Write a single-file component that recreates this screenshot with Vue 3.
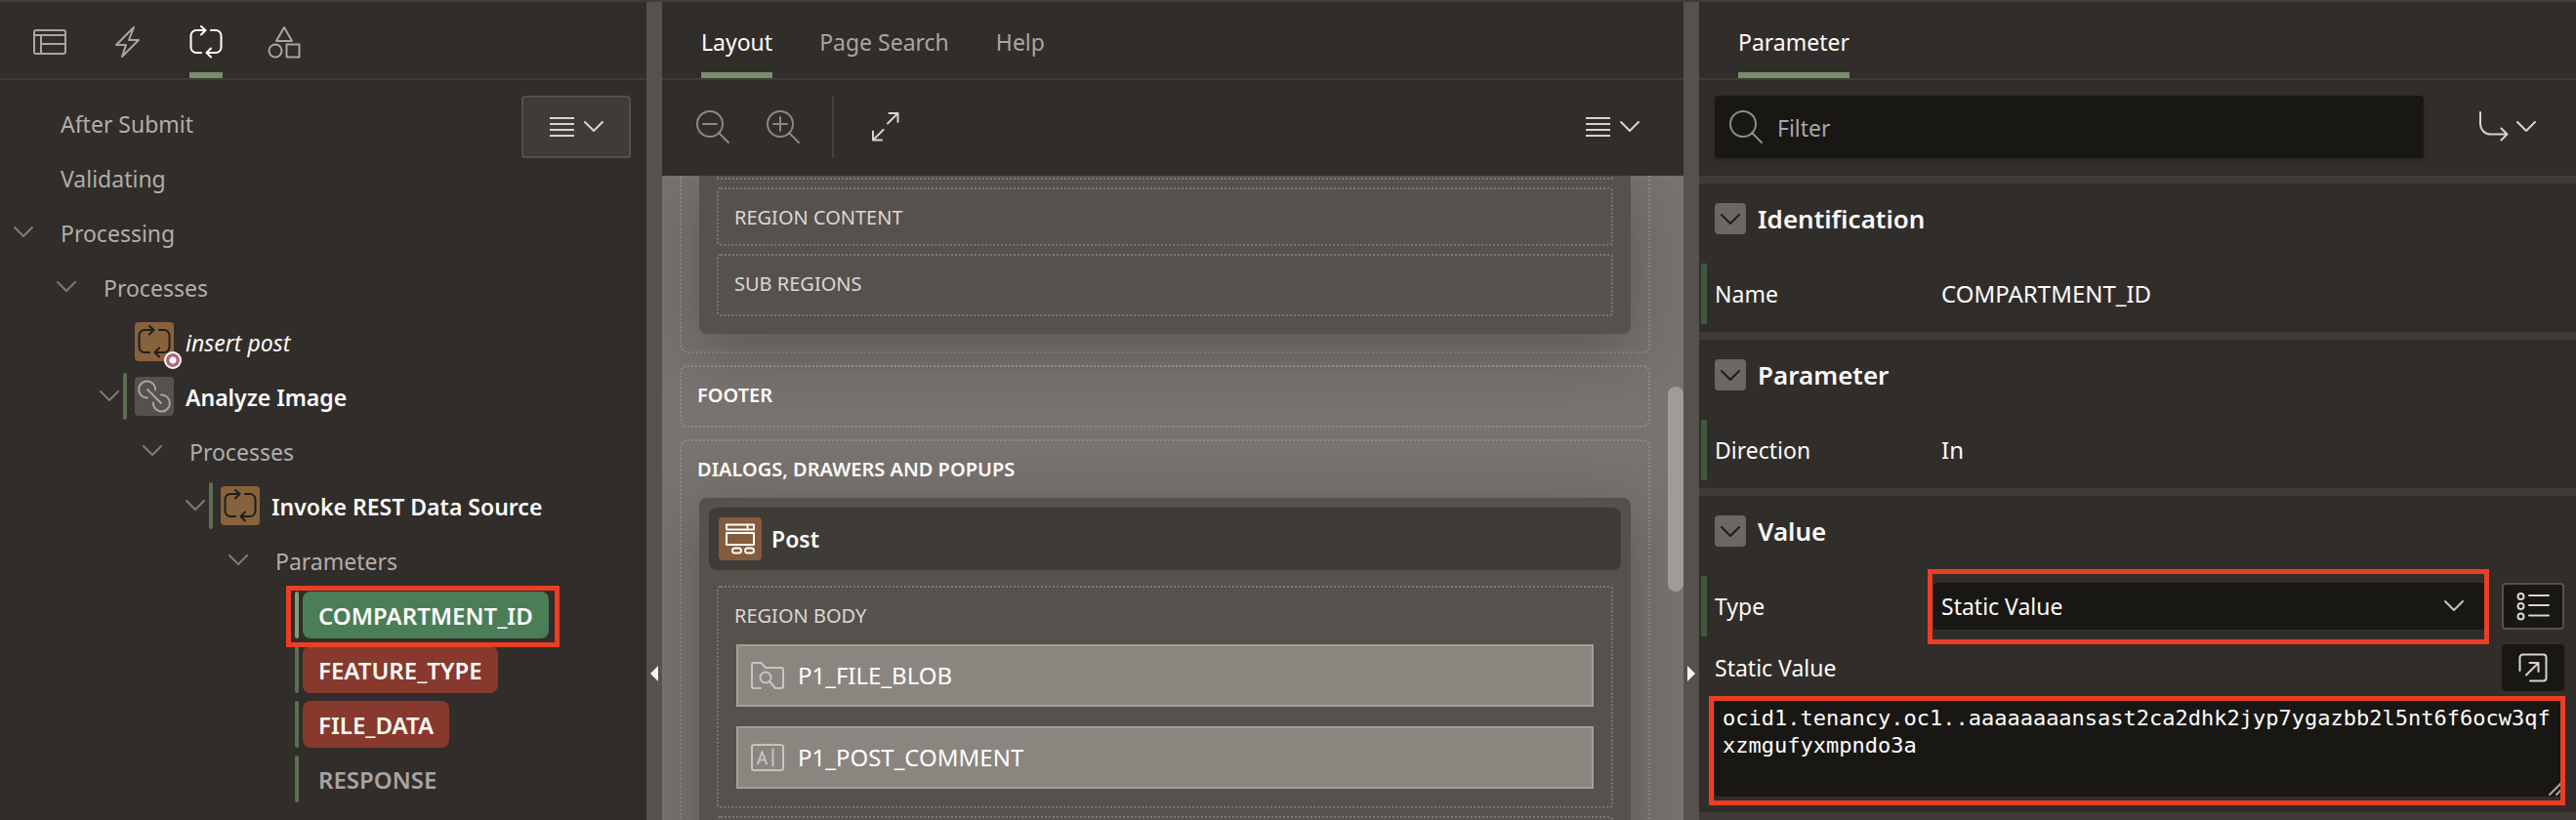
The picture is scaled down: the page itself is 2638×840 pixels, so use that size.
<script setup>
import { ref } from 'vue'

const tree = [
  { text: 'After Submit', level: 0, kind: 'folder' },
  { text: 'Validating', level: 0, kind: 'folder' },
  { text: 'Processing', level: 0, kind: 'folder', open: true },
  { text: 'Processes', level: 1, kind: 'folder', open: true },
  { text: 'insert post', level: 2, kind: 'node', icon: 'process', italic: true, badge: true },
  { text: 'Analyze Image', level: 2, kind: 'node', icon: 'chain', open: true, changed: true },
  { text: 'Processes', level: 3, kind: 'folder', open: true },
  { text: 'Invoke REST Data Source', level: 4, kind: 'node', icon: 'process', open: true, changed: true },
  { text: 'Parameters', level: 5, kind: 'folder', open: true },
  { text: 'COMPARTMENT_ID', level: 6, kind: 'chip', tone: 'selected', changed: true, marked: true },
  { text: 'FEATURE_TYPE', level: 6, kind: 'chip', tone: 'error', changed: true },
  { text: 'FILE_DATA', level: 6, kind: 'chip', tone: 'error', changed: true },
  { text: 'RESPONSE', level: 6, kind: 'chip', tone: 'muted', changed: true }
]

const filter = ref('')
const type = ref('Static Value')
const staticValue = ref('ocid1.tenancy.oc1..aaaaaaaansast2ca2dhk2jyp7ygazbb2l5nt6f6ocw3qfxzmgufyxmpndo3a')
</script>

<template>
  <div class="designer">
    <section class="pane" aria-label="Page processing">
      <nav class="tabs icon-tabs">
        <button class="tab" aria-label="Rendering">
          <svg width="34" height="34" viewBox="0 0 34 34"><rect x="1" y="5" width="32" height="24" rx="2" /><path d="M1 10h32M8 10v19M8 19h25" /></svg>
        </button>
        <button class="tab" aria-label="Dynamic Actions">
          <svg width="34" height="34" viewBox="0 0 34 34"><path d="M23 2L5 20h10l-4 12L28 15H18z" /></svg>
        </button>
        <button class="tab active" aria-label="Processing">
          <svg width="34" height="34" viewBox="0 0 34 34"><path d="M12 28H7a5.5 5.5 0 0 1-5.5-5.5v-12A5.5 5.5 0 0 1 7 5h9M12 1l4.500 4L12 9.500M22 5h5a5.5 5.5 0 0 1 5.5 5.5v12A5.5 5.5 0 0 1 27 28h-9M22 23.500L17.500 28l4.500 4.500" /></svg>
        </button>
        <button class="tab" aria-label="Page Shared Components">
          <svg width="34" height="34" viewBox="0 0 34 34"><path d="M17 2l8 14H9z" /><circle cx="8" cy="26" r="6.5" /><rect x="19.5" y="19.5" width="13" height="13" /></svg>
        </button>
      </nav>
      <div class="tree-area">
        <ul class="tree">
          <li v-for="(row, i) in tree" :key="i" class="row" :class="'level-' + row.level">
            <button v-if="row.open" class="toggle" :aria-label="'Collapse ' + row.text">
              <svg width="20" height="14" viewBox="0 0 20 14"><path d="M1 2l9 9 9-9" /></svg>
            </button>
            <span v-else class="toggle"></span>
            <span class="entry" :class="row.kind">
              <span v-if="row.kind !== 'folder'" class="bar" :class="{ on: row.changed, bright: row.marked }"></span>
              <span v-if="row.icon" class="node-icon" :class="row.icon">
                <svg v-if="row.icon === 'process'" width="34" height="34" viewBox="0 0 34 34"><path d="M12 28H7a5.5 5.5 0 0 1-5.5-5.5v-12A5.5 5.5 0 0 1 7 5h9M12 1l4.500 4L12 9.500M22 5h5a5.5 5.5 0 0 1 5.5 5.5v12A5.5 5.5 0 0 1 27 28h-9M22 23.500L17.500 28l4.500 4.500" /></svg>
                <svg v-else width="34" height="34" viewBox="0 0 34 34"><path d="M10 18.500H9.500A8.500 8.500 0 1 1 18 8.500v2M24 15.500h.5A8.500 8.500 0 1 1 16 25.500v-2M10 10l14 14" /></svg>
                <span v-if="row.badge" class="badge"></span>
              </span>
              <span class="text" :class="[row.tone, { italic: row.italic }]">{{ row.text }}</span>
              <span v-if="row.marked" class="mark row-mark"></span>
            </span>
          </li>
        </ul>
        <button class="menu boxed" aria-label="Tree menu">
          <svg width="25" height="22" viewBox="0 0 25 22"><path d="M0 2h25M0 8h25M0 14h25M0 20h25" /></svg>
          <svg width="20" height="14" viewBox="0 0 20 14"><path d="M1 2l9 9 9-9" /></svg>
        </button>
      </div>
    </section>

    <button class="splitter" aria-label="Collapse left pane"><span class="arrow left"></span></button>

    <section class="pane" aria-label="Layout">
      <nav class="tabs">
        <button class="tab active">Layout</button>
        <button class="tab">Page Search</button>
        <button class="tab">Help</button>
      </nav>
      <div class="toolbar">
        <button class="tool" aria-label="Zoom out">
          <svg width="34" height="34" viewBox="0 0 34 34"><circle cx="14" cy="14" r="13" /><path d="M23 23l10 10M7 14h14" /></svg>
        </button>
        <button class="tool" aria-label="Zoom in">
          <svg width="34" height="34" viewBox="0 0 34 34"><circle cx="14" cy="14" r="13" /><path d="M23 23l10 10M7 14h14M14 7v14" /></svg>
        </button>
        <span class="divider"></span>
        <button class="tool bright" aria-label="Expand">
          <svg width="30" height="32" viewBox="0 0 30 32"><path d="M17 12.500L27.500 2M18.500 2h9v9M12.500 19L2 29.500M2 20.500v9h9" /></svg>
        </button>
        <button class="menu" aria-label="Layout menu">
          <svg width="25" height="22" viewBox="0 0 25 22"><path d="M0 2h25M0 8h25M0 14h25M0 20h25" /></svg>
          <svg width="20" height="14" viewBox="0 0 20 14"><path d="M1 2l9 9 9-9" /></svg>
        </button>
      </div>
      <div class="canvas">
        <div class="slot cut">
          <div class="region">
            <div class="zone stub-top"></div>
            <div class="zone">REGION CONTENT</div>
            <div class="zone tall">SUB REGIONS</div>
          </div>
        </div>
        <div class="slot"><h3>FOOTER</h3></div>
        <div class="slot last">
          <h3>DIALOGS, DRAWERS AND POPUPS</h3>
          <div class="region">
            <header class="region-head">
              <span class="region-icon">
                <svg width="30" height="32" viewBox="0 0 30 32"><rect x="1" y="1.5" width="28" height="5" /><path d="M22.500 1.500v5" /><rect x="1" y="10" width="28" height="12" /><rect x="7" y="25.5" width="9" height="5" rx="2.5" /><rect x="20" y="25.5" width="9" height="5" rx="2.5" /></svg>
              </span>
              Post
            </header>
            <div class="zone body">
              REGION BODY
              <div class="item">
                <svg width="34" height="28" viewBox="0 0 34 28"><path d="M10 27H3a2 2 0 0 1-2-2V3a2 2 0 0 1 2-2h7.500L15 6h16a2 2 0 0 1 2 2v17a2 2 0 0 1-2 2h-6L19.500 20.500" /><circle cx="15" cy="16" r="5.5" /></svg>
                P1_FILE_BLOB
              </div>
              <div class="item">
                <svg width="34" height="28" viewBox="0 0 34 28"><rect x="1" y="1" width="32" height="26" rx="2" /><path d="M7 20.500L11.500 8 16 20.500M8.500 16.500h6M22.500 5.500v17" /></svg>
                P1_POST_COMMENT
              </div>
            </div>
            <div class="zone stub-bottom"></div>
          </div>
        </div>
        <span class="thumb"></span>
      </div>
    </section>

    <button class="splitter" aria-label="Collapse right pane"><span class="arrow right"></span></button>

    <section class="pane" aria-label="Property editor">
      <nav class="tabs">
        <button class="tab active">Parameter</button>
      </nav>
      <div class="toolbar editor-bar">
        <label class="filter">
          <svg width="34" height="34" viewBox="0 0 34 34"><circle cx="14" cy="14" r="13" /><path d="M23 23l10 10" /></svg>
          <input v-model="filter" type="text" placeholder="Filter" aria-label="Filter" />
        </label>
        <button class="menu" aria-label="Go to group">
          <svg width="30" height="32" viewBox="0 0 30 32"><path d="M1 1v12a10.500 10.500 0 0 0 10.500 10.500H28M22.500 17.500l6 6-6 6" /></svg>
          <svg width="20" height="14" viewBox="0 0 20 14"><path d="M1 2l9 9 9-9" /></svg>
        </button>
      </div>

      <section class="group">
        <h2><button class="fold" aria-label="Collapse Identification"><svg width="20" height="14" viewBox="0 0 20 14"><path d="M1 2l9 9 9-9" /></svg></button>Identification</h2>
        <div class="prop changed">
          <span class="name">Name</span>
          <span class="value">COMPARTMENT_ID</span>
        </div>
      </section>

      <section class="group">
        <h2><button class="fold" aria-label="Collapse Parameter"><svg width="20" height="14" viewBox="0 0 20 14"><path d="M1 2l9 9 9-9" /></svg></button>Parameter</h2>
        <div class="prop changed">
          <span class="name">Direction</span>
          <span class="value">In</span>
        </div>
      </section>

      <section class="group">
        <h2><button class="fold" aria-label="Collapse Value"><svg width="20" height="14" viewBox="0 0 20 14"><path d="M1 2l9 9 9-9" /></svg></button>Value</h2>
        <div class="prop changed">
          <label class="name" for="value-type">Type</label>
          <div class="picker">
            <select id="value-type" v-model="type">
              <option>Static Value</option>
            </select>
            <svg width="20" height="14" viewBox="0 0 20 14"><path d="M1 2l9 9 9-9" /></svg>
            <span class="mark picker-mark"></span>
          </div>
          <button class="square outlined" aria-label="List of values">
            <svg width="34" height="30" viewBox="0 0 34 30"><circle cx="4.5" cy="5" r="3" /><circle cx="4.5" cy="15" r="3" /><circle cx="4.5" cy="25.5" r="3" /><path d="M13 4h20M13 14h20M13 24.500h20" /></svg>
          </button>
        </div>
        <div class="prop wide">
          <label class="name" for="static-value">Static Value</label>
          <button class="square" aria-label="Open code editor">
            <svg width="30" height="30" viewBox="0 0 30 30"><path d="M1.500 18V4.500a3 3 0 0 1 3-3h21a3 3 0 0 1 3 3v21a3 3 0 0 1-3 3H12M8 22.500L20.500 10M11.500 10h9v9" /></svg>
          </button>
        </div>
        <div class="code">
          <textarea id="static-value" v-model="staticValue" spellcheck="false"></textarea>
          <svg class="grip" width="14" height="14" viewBox="0 0 14 14"><path d="M1 13L13 1M8 13l5-5" /></svg>
          <span class="mark code-mark"></span>
        </div>
      </section>
    </section>
  </div>
</template>

<style>
body {
  margin: 0;
  background: #312d2a;
}
</style>

<style scoped>
.designer {
  display: grid;
  grid-template-columns: 662fr 16px 1046fr 16px 898fr;
  height: 100vh;
  box-sizing: border-box;
  border-top: 2px solid #3f3b36;
  background: #312d2a;
  color: #fcfbfa;
  font: 24px/32px "Noto Sans", "Open Sans", sans-serif;
  overflow: hidden;
}
.designer * {
  box-sizing: border-box;
}
button,
input,
select,
textarea {
  margin: 0;
  padding: 0;
  border: 0;
  border-radius: 0;
  background: none;
  color: inherit;
  font: inherit;
  outline: 0;
}
svg {
  display: block;
  flex: none;
  fill: none;
  stroke: currentColor;
  stroke-width: 2;
  stroke-linecap: round;
  stroke-linejoin: round;
}
h2,
h3,
ul {
  margin: 0;
  padding: 0;
}
.pane {
  display: flex;
  flex-direction: column;
  min-width: 0;
  min-height: 0;
}

/* Tabs */
.tabs {
  display: flex;
  flex: none;
  gap: 48px;
  height: 80px;
  padding: 0 40px;
  border-bottom: 2px solid #3f3b36;
}
.icon-tabs {
  padding: 0 34px;
  gap: 46px;
}
.tab {
  display: flex;
  align-items: center;
  padding: 10px 0 0;
  height: 78px;
  border-bottom: 6px solid transparent;
  color: #a8a5a2;
  font-size: 23px;
}
.tab.active {
  border-color: #75906a;
  color: #fff;
}

/* Tree */
.tree-area {
  position: relative;
  padding-top: 16px;
}
.tree {
  list-style: none;
}
.row {
  display: flex;
  align-items: center;
  height: 56px;
  padding: 4px 0 4px 14px;
}
.level-1 { padding-left: 58px; }
.level-2 { padding-left: 102px; }
.level-3 { padding-left: 146px; }
.level-4 { padding-left: 190px; }
.level-5 { padding-left: 234px; }
.level-6 { padding-left: 278px; }
.toggle {
  width: 24px;
  flex: none;
  color: #7d7a77;
}
.entry {
  position: relative;
  display: flex;
  align-items: center;
  height: 48px;
  white-space: nowrap;
}
.entry.folder {
  padding-left: 24px;
  color: #b0aeab;
  font-size: 23px;
}
.entry.node {
  font-size: 23px;
  font-weight: 600;
}
.entry.chip {
  font-weight: 600;
}
.bar {
  width: 4px;
  height: 48px;
  border-radius: 2px;
}
.bar.on { background: #5c6f50; }
.bar.bright { background: #7da072; }
.node-icon {
  position: relative;
  display: flex;
  align-items: center;
  justify-content: center;
  width: 40px;
  height: 40px;
  margin: 0 12px 0 8px;
  border-radius: 4px;
}
.node-icon.process {
  background: #87623c;
  color: #201e1b;
}
.node-icon.chain {
  background: #55514d;
  color: #a8a5a2;
}
.badge {
  position: absolute;
  right: -8px;
  bottom: -8px;
  width: 18px;
  height: 18px;
  border: 2px solid #fff;
  border-radius: 50%;
  background: radial-gradient(circle, #fff 3px, #b46678 4px);
}
.text {
  height: 48px;
  line-height: 50px;
}
.text.italic {
  font-style: italic;
  font-weight: 400;
}
.chip .text {
  margin-left: 4px;
  padding: 0 16px;
  border-radius: 8px;
}
.text.selected { background: #4b7d58; }
.text.error { background: #87392d; }
.text.muted { color: #a8a5a2; }

/* Highlight frames */
.mark {
  position: absolute;
  z-index: 2;
  border: 5px solid #ea3f25;
  pointer-events: none;
}
.row-mark { inset: -6px -11px -9px -9px; }
.picker-mark { inset: -14px 0 -15px -6px; }
.code-mark { inset: -3px -1px -9px -6px; }

/* Menu buttons */
.menu {
  display: flex;
  align-items: center;
  justify-content: center;
  gap: 10px;
  height: 64px;
  color: #d6d3d0;
}
.menu.boxed {
  position: absolute;
  top: 16px;
  right: 16px;
  width: 112px;
  border: 2px solid #54504b;
  border-radius: 4px;
  background: #3f3b36;
}

/* Splitters */
.splitter {
  display: grid;
  grid-template-rows: 83fr 17fr;
  align-items: end;
  justify-content: center;
  background: #55514c;
}
.arrow {
  border: 8px solid transparent;
}
.arrow.left {
  border-left: 0;
  border-right-color: #f5f4f2;
}
.arrow.right {
  border-right: 0;
  border-left-color: #f5f4f2;
}

/* Toolbars */
.toolbar {
  display: flex;
  flex: none;
  align-items: center;
  height: 98px;
  padding: 0 45px 2px 35px;
}
.tool {
  margin-right: 38px;
  color: #8b8784;
}
.tool.bright {
  margin: 0;
  color: #d6d3d0;
}
.divider {
  width: 2px;
  height: 64px;
  margin: 0 38px 0 -5px;
  background: #45413c;
}
.toolbar .menu {
  margin-left: auto;
}

/* Layout canvas */
.canvas {
  position: relative;
  display: flex;
  flex: 1;
  flex-direction: column;
  gap: 12px;
  min-height: 0;
  padding: 0 34px 0 18px;
  overflow: hidden;
  background: #78736e;
}
.slot {
  flex: none;
  padding: 0 18px 2px;
  border: 2px dotted #8f8b86;
  border-radius: 8px;
}
.slot.cut {
  padding-bottom: 18px;
  border-top: 0;
  border-radius: 0 0 8px 8px;
}
.slot.last {
  padding-bottom: 40px;
}
h3 {
  height: 58px;
  margin: 0 -2px;
  font-size: 20px;
  font-weight: 600;
  line-height: 58px;
}
.region {
  display: flex;
  flex-direction: column;
  gap: 8px;
  padding: 10px;
  border-radius: 8px;
  background: #56514d;
  box-shadow: 0 16px 64px rgba(0, 0, 0, 0.26);
}
.cut .region {
  padding-top: 0;
  padding-bottom: 18px;
  border-radius: 0 0 8px 8px;
}
.region-head {
  display: flex;
  align-items: center;
  gap: 10px;
  height: 64px;
  padding: 0 10px;
  border-radius: 8px;
  background: #3f3b36;
  font-size: 23px;
  font-weight: 600;
}
.region-icon {
  display: flex;
  align-items: center;
  justify-content: center;
  width: 44px;
  height: 44px;
  border-radius: 4px;
  background: #855b3e;
  color: #fff;
}
.zone {
  height: 60px;
  margin: 0 8px;
  padding: 0 16px;
  border: 2px dotted #7b7773;
  border-radius: 4px;
  color: #dbd8d5;
  font-size: 20px;
  line-height: 58px;
}
.zone.tall {
  height: 64px;
}
.zone.body {
  height: auto;
  margin-top: 8px;
  padding-bottom: 18px;
}
.zone.stub-top {
  height: 4px;
  border-top: 0;
}
.zone.stub-bottom {
  height: 40px;
}
.item {
  display: flex;
  align-items: center;
  gap: 14px;
  height: 64px;
  margin: 0 2px;
  padding: 0 13px;
  border: 2px solid #a39f97;
  background: #8b8580;
  color: #fff;
  font-size: 24px;
}
.item + .item {
  margin-top: 20px;
}
.item svg {
  color: #c7c4c0;
}
.thumb {
  position: absolute;
  top: 216px;
  right: 0;
  width: 16px;
  height: 210px;
  border-radius: 8px;
  background: #9f9b96;
}

/* Property editor */
.editor-bar {
  gap: 16px;
  padding: 0 41px 2px 16px;
}
.filter {
  display: flex;
  flex: 1;
  align-items: center;
  gap: 15px;
  max-width: 726px;
  height: 64px;
  padding: 0 15px;
  border-radius: 4px;
  background: #191714;
  box-shadow: 0 2px 4px rgba(0, 0, 0, 0.2);
  color: #8f8c88;
}
.filter input {
  flex: 1;
  min-width: 0;
  height: 48px;
  padding-top: 2px;
  color: #fff;
  font-size: 23px;
}
.filter input::placeholder {
  color: #a8a5a2;
  opacity: 1;
}
.editor-bar .menu {
  gap: 8px;
}
.group {
  flex: none;
  border-top: 8px solid #3f3b36;
  padding-bottom: 8px;
}
.group:last-child {
  border-bottom: 8px solid #3f3b36;
  padding-bottom: 16px;
}
h2 {
  display: flex;
  align-items: center;
  gap: 12px;
  height: 82px;
  padding: 0 16px 10px;
  font-size: 26px;
  font-weight: 600;
}
.fold {
  display: flex;
  align-items: center;
  justify-content: center;
  width: 32px;
  height: 32px;
  padding-top: 2px;
  border-radius: 4px;
  background: #6b6863;
  color: #1f1d1a;
}
.prop {
  display: flex;
  align-items: center;
  height: 62px;
  padding: 0 12px 0 16px;
}
.prop.changed {
  margin-left: 2px;
  padding-left: 8px;
  border-left: 6px solid #3e5a41;
}
.name {
  width: 232px;
  flex: none;
  font-size: 23px;
}
.changed > .name {
  width: 224px;
}
.value {
  padding-left: 8px;
  font-size: 24px;
}
.picker {
  position: relative;
  display: flex;
  flex: 1;
  align-items: center;
  margin-right: 13px;
}
.picker select {
  width: 100%;
  height: 48px;
  padding: 0 8px;
  border-radius: 4px;
  background: #191714;
  appearance: none;
  font-size: 23px;
}
.picker svg {
  position: absolute;
  right: 26px;
  color: #c7c4c0;
  pointer-events: none;
}
.square {
  display: flex;
  align-items: center;
  justify-content: center;
  width: 64px;
  height: 48px;
  flex: none;
  border-radius: 4px;
  background: #191714;
  color: #d6d3d0;
}
.square.outlined {
  border: 2px solid #55514c;
}
.wide {
  justify-content: space-between;
  height: 64px;
}
.code {
  position: relative;
  margin: 0 12px 0 16px;
}
textarea {
  display: block;
  width: 100%;
  height: 100px;
  padding: 6px 8px;
  border-radius: 4px;
  background: #191714;
  color: #fff;
  font: 22px/28px "DejaVu Sans Mono", monospace;
  resize: none;
  word-break: break-all;
}
.grip {
  position: absolute;
  right: 2px;
  bottom: 1px;
  color: #a8a5a2;
}
</style>
